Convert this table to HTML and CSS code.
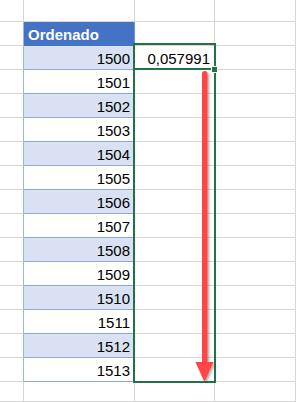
FILE: index.html
```html
<!DOCTYPE html>
<html lang="es">
<head>
<meta charset="utf-8">
<title>Ordenado</title>
<link rel="stylesheet" href="styles.css">
</head>
<body>
<div class="sheet">
  <div class="grid">
    <div class="c"></div><div class="c"></div><div class="c"></div><div class="c"></div><div class="c end"></div>

    <div class="c tl"></div><div class="c hdr">Ordenado</div><div class="c"></div><div class="c"></div><div class="c end"></div>

    <div class="c tl"></div><div class="c num band">1500</div><div class="c num active">0,057991</div><div class="c"></div><div class="c end"></div>
    <div class="c tl"></div><div class="c num plain">1501</div><div class="c"></div><div class="c"></div><div class="c end"></div>
    <div class="c tl"></div><div class="c num band">1502</div><div class="c"></div><div class="c"></div><div class="c end"></div>
    <div class="c tl"></div><div class="c num plain">1503</div><div class="c"></div><div class="c"></div><div class="c end"></div>
    <div class="c tl"></div><div class="c num band">1504</div><div class="c"></div><div class="c"></div><div class="c end"></div>
    <div class="c tl"></div><div class="c num plain">1505</div><div class="c"></div><div class="c"></div><div class="c end"></div>
    <div class="c tl"></div><div class="c num band">1506</div><div class="c"></div><div class="c"></div><div class="c end"></div>
    <div class="c tl"></div><div class="c num plain">1507</div><div class="c"></div><div class="c"></div><div class="c end"></div>
    <div class="c tl"></div><div class="c num band">1508</div><div class="c"></div><div class="c"></div><div class="c end"></div>
    <div class="c tl"></div><div class="c num plain">1509</div><div class="c"></div><div class="c"></div><div class="c end"></div>
    <div class="c tl"></div><div class="c num band">1510</div><div class="c"></div><div class="c"></div><div class="c end"></div>
    <div class="c tl"></div><div class="c num plain">1511</div><div class="c"></div><div class="c"></div><div class="c end"></div>
    <div class="c tl"></div><div class="c num band">1512</div><div class="c"></div><div class="c"></div><div class="c end"></div>
    <div class="c tl"></div><div class="c num plain">1513</div><div class="c"></div><div class="c"></div><div class="c end"></div>

    <div class="c"></div><div class="c"></div><div class="c"></div><div class="c"></div><div class="c end"></div>
  </div>

  <div class="selection"></div>
  <div class="active-line"></div>
  <div class="handle"></div>

  <svg class="arrow" width="296" height="402" viewBox="0 0 296 402" aria-hidden="true">
    <defs>
      <filter id="sh" x="-50%" y="-10%" width="200%" height="120%">
        <feDropShadow dx="1.5" dy="1.5" stdDeviation="1.2" flood-color="#000" flood-opacity="0.35"/>
      </filter>
    </defs>
    <g filter="url(#sh)" fill="#ff4545">
      <rect x="202" y="71" width="5.5" height="294" rx="2.7"/>
      <polygon points="195.5,362 213.5,362 204.5,382"/>
    </g>
  </svg>
</div>
</body>
</html>
```

FILE: styles.css
```css
* { box-sizing: border-box; }

html, body {
  margin: 0;
  padding: 0;
  background: #ffffff;
}

.sheet {
  position: relative;
  width: 296px;
  height: 402px;
  overflow: hidden;
  font-family: "Liberation Sans", Arial, sans-serif;
  font-size: 15px;
  color: #000;
}

.grid {
  display: grid;
  grid-template-columns: 24px 111px 80px 81px 1fr;
  grid-template-rows: 22px repeat(15, 24px) 1fr;
  height: 402px;
}

.c {
  border-right: 1px solid #d6d6d6;
  border-bottom: 1px solid #d6d6d6;
}

.c.end {
  border-right: none;
}

.c.tl {
  border-right-color: #9fb6df;
}

.hdr {
  background: #4472c4;
  color: #ffffff;
  font-weight: bold;
  border-right-color: #6f92d2;
  border-bottom-color: #4472c4;
  padding-left: 4px;
  display: flex;
  align-items: flex-end;
  line-height: 18px;
  padding-bottom: 1px;
}

.num {
  display: flex;
  align-items: flex-end;
  justify-content: flex-end;
  padding-right: 4px;
  line-height: 18px;
  padding-bottom: 1px;
}

.band {
  background: #d9e1f2;
  border-bottom-color: #8ea9db;
  border-right-color: #b4c6e7;
}

.plain {
  background: #ffffff;
  border-bottom-color: #8ea9db;
  border-right-color: #b4c6e7;
}

.active {
  padding-right: 4px;
}

.selection {
  position: absolute;
  left: 133px;
  top: 43px;
  width: 83px;
  height: 340px;
  border: 2px solid #217346;
  pointer-events: none;
}

.active-line {
  position: absolute;
  left: 133px;
  top: 68px;
  width: 83px;
  height: 2px;
  background: #217346;
}

.handle {
  position: absolute;
  left: 211px;
  top: 66px;
  width: 7px;
  height: 7px;
  background: #217346;
  border: 1px solid #ffffff;
}

.arrow {
  position: absolute;
  left: 0;
  top: 0;
  pointer-events: none;
}
```
